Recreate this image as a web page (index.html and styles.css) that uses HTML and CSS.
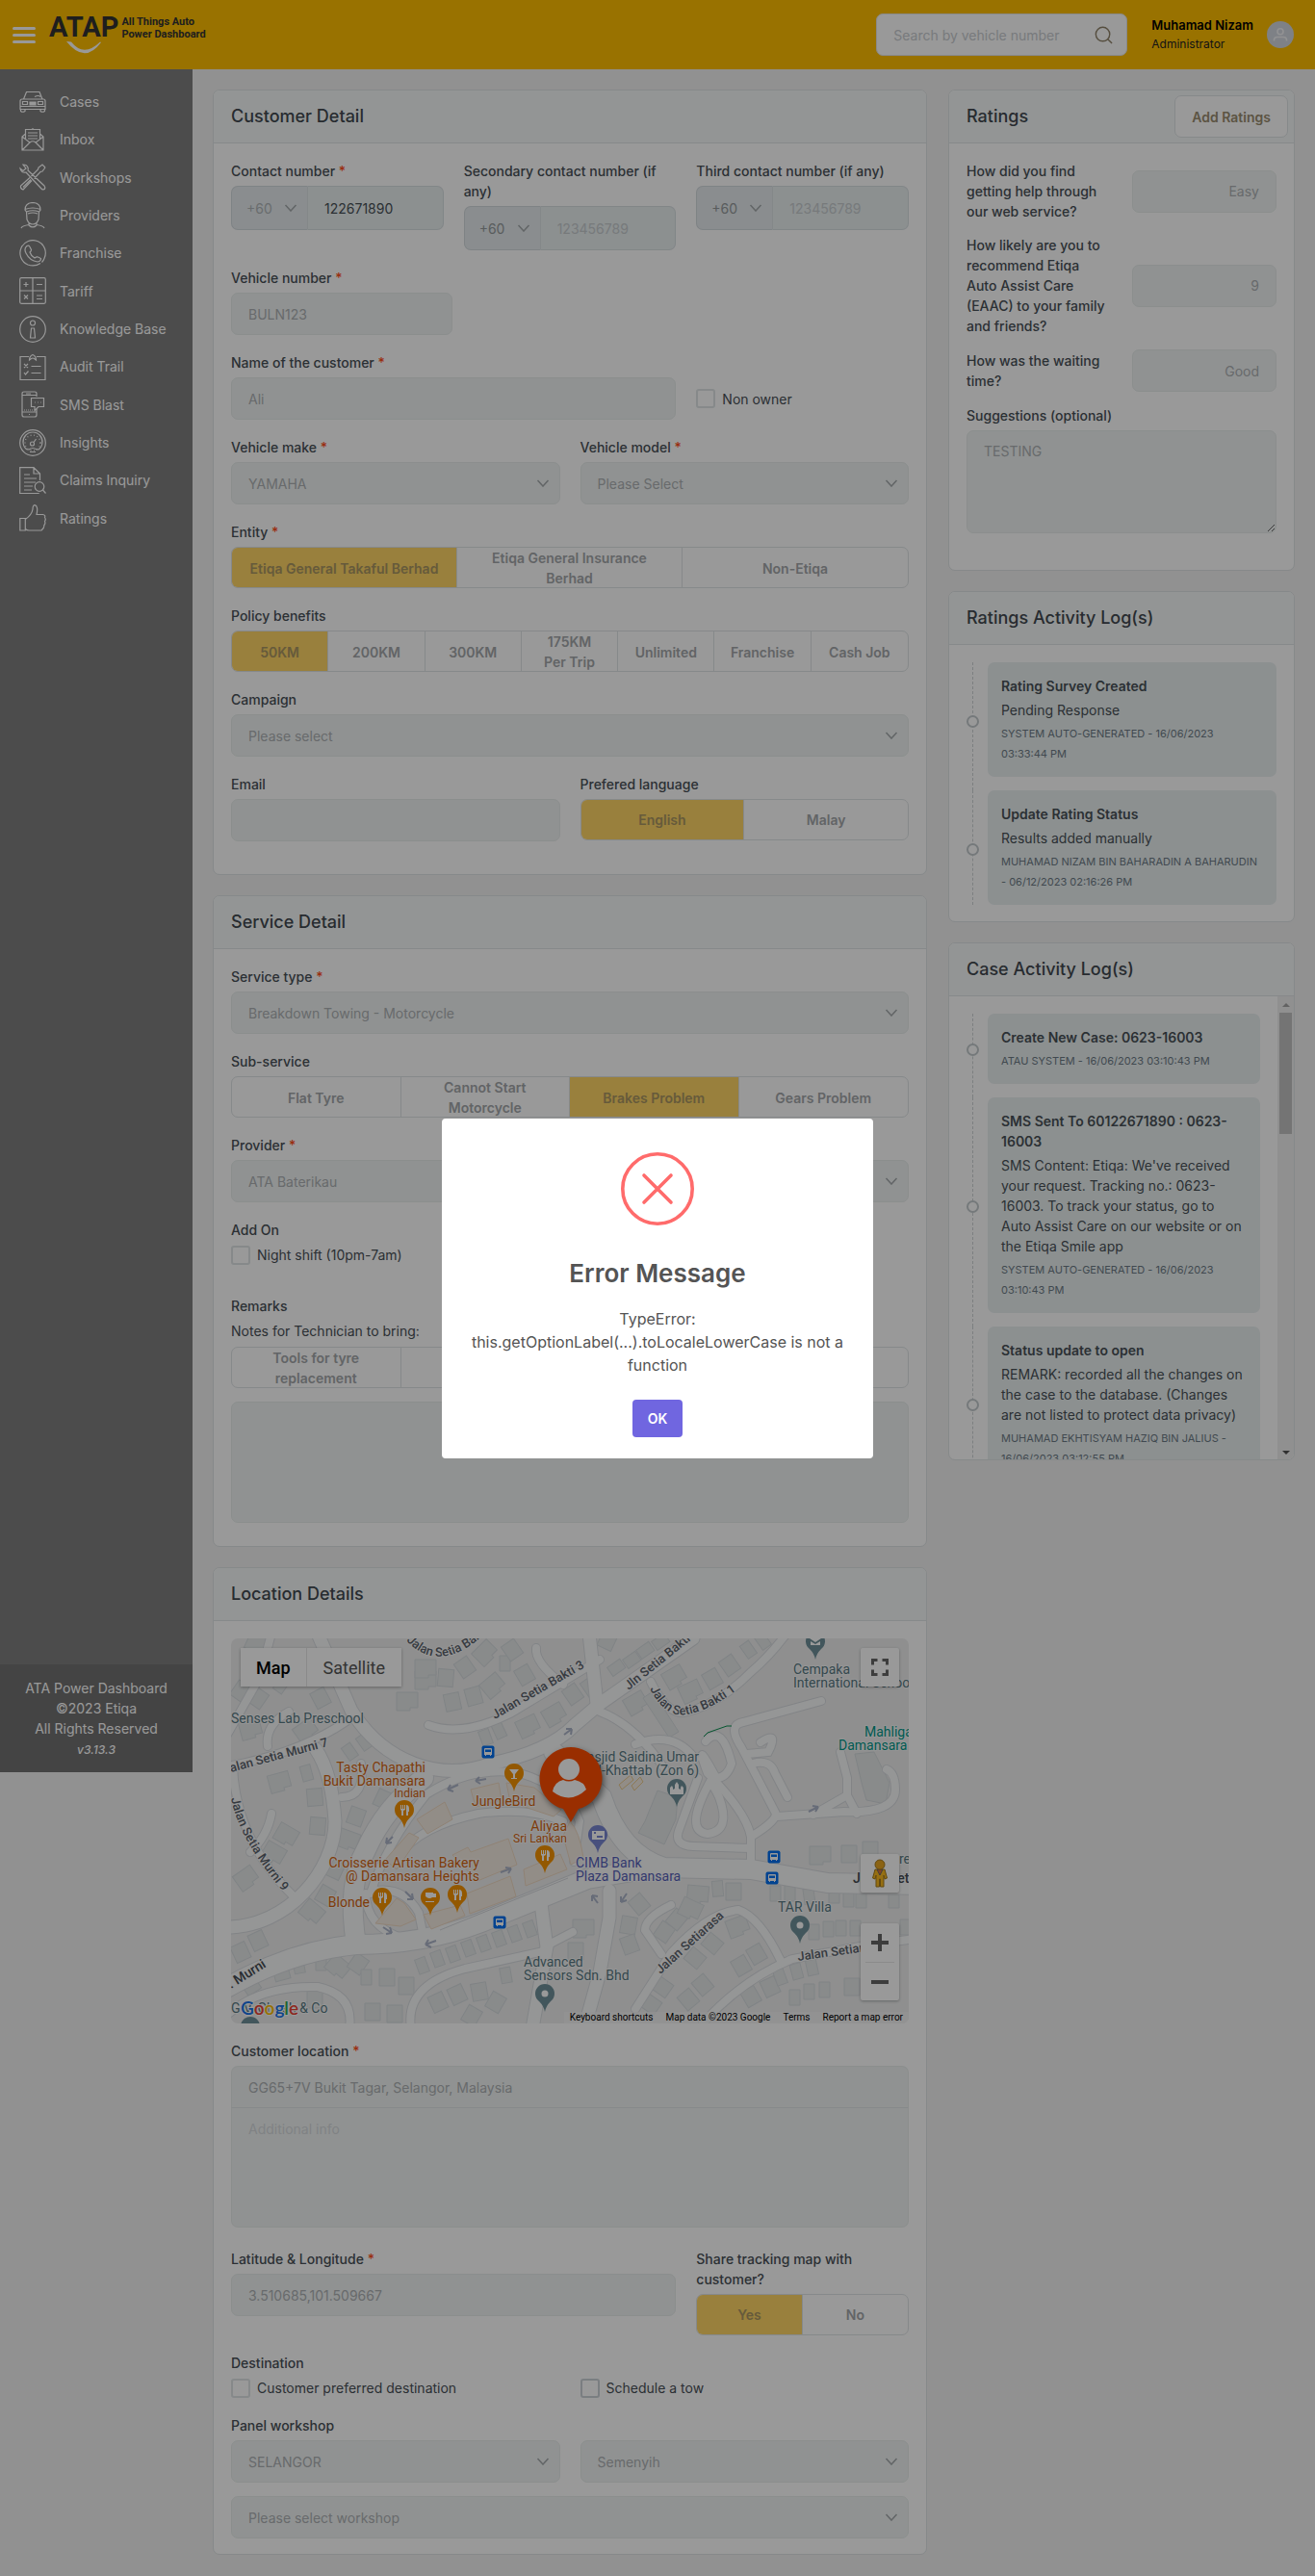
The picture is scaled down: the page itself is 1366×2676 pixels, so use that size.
FILE: index.html
```html
<!DOCTYPE html>
<html lang="en">
<head>
<meta charset="utf-8">
<meta name="viewport" content="width=device-width, initial-scale=1">
<title>ATA Power Dashboard</title>
<link rel="stylesheet" href="styles.css">
</head>
<body>
<header class="topbar">
  <button class="menu-btn" type="button" aria-label="Toggle menu"><span></span><span></span><span></span></button>
  <a class="logo" href="#" aria-label="ATAP All Things Auto Power Dashboard">
    <span class="logo-mark">ATAP
      <svg class="logo-smile" viewBox="0 0 36 13" aria-hidden="true"><path d="M0 0l5 .5Q18 17 35 .5L36 1Q19 24 0 0z" fill="#fff"/></svg>
    </span>
    <span class="logo-tag">All Things Auto<br>Power Dashboard</span>
  </a>
  <form class="search" role="search">
    <input type="text" aria-label="Search by vehicle number" placeholder="Search by vehicle number">
    <svg viewBox="0 0 20 20" aria-hidden="true"><circle cx="9" cy="9" r="7.6"/><path d="M14.500 14.500l4.500 4.500"/></svg>
  </form>
  <div class="user">
    <div class="user-text"><strong>Muhamad Nizam</strong><span>Administrator</span></div>
    <svg class="avatar" viewBox="0 0 28 28" aria-hidden="true"><circle cx="14" cy="14" r="14" fill="#d3d7df"/><g fill="none" stroke="#f3f4f6" stroke-width="1.600"><circle cx="14" cy="10.800" r="3"/><path d="M7.500 20.500v-1q0-3 3.500-3h6q3.500 0 3.500 3v1"/></g></svg>
  </div>
</header>

<div class="shell">
  <aside class="sidebar">
    <nav class="nav" aria-label="Main">
      <a href="#"><svg viewBox="0 0 28 28"><path d="M4.500 11L7.500 3.500h13.500L24 11M1 13q0-2 2-2h22q2 0 2 2v8.500H1zM1 18.500h26M1.500 21.500v2q2 1.500 4.500 0v-2M22 21.500v2q2 1.500 4.500 0v-2M16 8.500q4-2 6 0"/><path d="M3.500 13.500h5v3h-5zM19.500 13.500h5v3h-5z"/><path d="M11 14h6v3h-6z" fill="#fff"/></svg>Cases</a>
      <a href="#"><svg viewBox="0 0 28 28"><path d="M6.500 13V3.500h15V13M6.500 8L3 11v14h22V11l-3.500-3M3 11l8 6-8 8M25 11l-8 6 8 8M11 17q3-2.500 6 0M9 7h10M9 10h10M9 13h10M13 3.500q1-1.500 2 0"/></svg>Inbox</a>
      <a href="#"><svg viewBox="0 0 28 28"><path d="M4 1Q8 1 9 4q.5 2 0 3l17 16q2 3-1 4-1 0-2-1L7 9Q2 10 1 5l3 2.500L7 5zM27 4l-3-3-4 3-.5 2-7 7M27 4l-3 4-2 .5-6.500 7M11 14.500L1.500 23Q1 26 4 27l9-9.500M4 24.500l8-8"/></svg>Workshops</a>
      <a href="#"><svg viewBox="0 0 28 28"><path d="M6 8q0-7 8-7.500Q22 1 22 8l-1.500 2q-6.500-2.500-13 0zM6 7.500q8-3 16 0M7.500 10l.5 8q2 5 6 5t6-5l.5-8M9 12q5-2 10 0M10 21.500v2q-7 1-8 3.500M18 21.500v2q7 1 8 3.500M10 24q4 4 8 0"/></svg>Providers</a>
      <a href="#"><svg viewBox="0 0 28 28"><path d="M22 24.500q-6 4-13 1.500A13.200 13.200 0 1 1 26 19.500q-1 2.500-2.500 4"/><path d="M8 6.500q2-1 3 1l1.500 3q0 1.500-1.500 2.500 1 3.500 5 6 2-1.500 3.500-1l3 1.500q0 3-3.500 3.500Q11 22 7 14q-2.500-5 1-7.500z"/></svg>Franchise</a>
      <a href="#"><svg viewBox="0 0 28 28"><rect x=".7" y=".7" width="26.600" height="26.600" rx="1.500"/><path d="M14 1v26M1 14h26M4.500 7.500h5M7 5v5M18 7.500h6M5 18.500l4 4M9 18.500l-4 4M18 19h6M18 22.500h6"/></svg>Tariff</a>
      <a href="#"><svg viewBox="0 0 28 28"><circle cx="14" cy="14" r="13.300"/><circle cx="14" cy="7.500" r="2.500"/><path d="M12.500 13h3l1 10h-5z"/></svg>Knowledge Base</a>
      <a href="#"><svg viewBox="0 0 28 28"><path d="M10 3.500H1v24h26v-24h-9M10.500 7q0-4 3.500-5.500Q17.500 3 17.500 7l-2-1.500q-1.500-1-3 0zM5 11l4 4M9 11l-4 4M12.500 13.500h10M5 20l1.500 2 3-3.500M12.500 20.500h10"/></svg>Audit Trail</a>
      <a href="#"><svg viewBox="0 0 28 28"><path d="M18 6V3q0-2-2-2H5Q3 1 3 3v22q0 2 2 2h11q2 0 2-2v-6M3 4.500h15M3 22h15M7 3h5M10 24.500h1"/><path d="M12.500 7.500h13v9h-5.500l-4 4v-4h-3.500zM16 12h.8M19 12h.8M22 12h.8"/><path d="M5 20h10" stroke-dasharray="1 1"/></svg>SMS Blast</a>
      <a href="#"><svg viewBox="0 0 28 28"><circle cx="14" cy="14" r="13.300"/><path d="M8 21a10 10 0 1 1 12 0M8 21h2q4-3 8 0h2M11 23.500h6"/><circle cx="14" cy="14" r="8" stroke-dasharray="1 2.500"/><circle cx="13.500" cy="15" r="2"/><path d="M15 13.500l2.500-3.500"/></svg>Insights</a>
      <a href="#"><svg viewBox="0 0 28 28"><path d="M21.500 14V7L15 .7H.7v27h20M15 .7V7h6.500M5 8h6M5 12h13M5 16h12M5 20h9M5 24h8"/><circle cx="21" cy="20.500" r="4.800"/><path d="M24.500 24l3 3.500"/></svg>Claims Inquiry</a>
      <a href="#"><svg viewBox="0 0 28 28"><path d="M.8 14.500h5.500v12.500H.8zM6.300 15.500Q13 11 14 5q0-4 2-4.300 4 .8 2 9.800h6.500q3 .5 2 3 1.500 2 0 4 1 2.500-.7 4 .5 3-2.800 5.500H10q-2 0-3.700-1.500"/></svg>Ratings</a>
    </nav>
    <footer class="side-foot">
      <p>ATA Power Dashboard<br>©2023 Etiqa<br>All Rights Reserved</p>
      <em>v3.13.3</em>
    </footer>
  </aside>

  <main class="content">
    <div class="col-main">
      <section class="card">
        <div class="card-head"><h2>Customer Detail</h2></div>
        <div class="card-body">
          <div class="row thirds">
            <div class="field">
              <label for="phone1">Contact number <i>*</i></label>
              <div class="phone"><select aria-label="Country code" disabled><option>+60</option></select><input class="filled" id="phone1" type="text" value="122671890" disabled></div>
            </div>
            <div class="field">
              <label for="phone2">Secondary contact number (if any)</label>
              <div class="phone open"><select aria-label="Secondary country code" disabled><option>+60</option></select><input id="phone2" type="text" placeholder="123456789" disabled></div>
            </div>
            <div class="field">
              <label for="phone3">Third contact number (if any)</label>
              <div class="phone open"><select aria-label="Third country code" disabled><option>+60</option></select><input id="phone3" type="text" placeholder="123456789" disabled></div>
            </div>
          </div>
          <div class="row thirds">
            <div class="field"><label for="vehicle">Vehicle number <i>*</i></label><input class="control plate" id="vehicle" type="text" value="BULN123" disabled></div>
          </div>
          <div class="row wide-narrow">
            <div class="field"><label for="name">Name of the customer <i>*</i></label><input class="control" id="name" type="text" value="Ali" disabled></div>
            <label class="check beside"><input type="checkbox" disabled>Non owner</label>
          </div>
          <div class="row halves">
            <div class="field"><label for="make">Vehicle make <i>*</i></label><select class="control" id="make" disabled><option>YAMAHA</option></select></div>
            <div class="field"><label for="model">Vehicle model <i>*</i></label><select class="control" id="model" disabled><option>Please Select</option></select></div>
          </div>
          <div class="row">
            <div class="field"><span class="label" id="l-entity">Entity <i>*</i></span>
              <div class="segments" role="group" aria-labelledby="l-entity"><button class="on" type="button" disabled>Etiqa General Takaful Berhad</button><button type="button" disabled>Etiqa General Insurance Berhad</button><button type="button" disabled>Non-Etiqa</button></div></div>
          </div>
          <div class="row">
            <div class="field"><span class="label" id="l-policy">Policy benefits</span>
              <div class="segments" role="group" aria-labelledby="l-policy"><button class="on" type="button" disabled>50KM</button><button type="button" disabled>200KM</button><button type="button" disabled>300KM</button><button type="button" disabled>175KM Per Trip</button><button type="button" disabled>Unlimited</button><button type="button" disabled>Franchise</button><button type="button" disabled>Cash Job</button></div></div>
          </div>
          <div class="row">
            <div class="field"><label for="campaign">Campaign</label><select class="control" id="campaign" disabled><option>Please select</option></select></div>
          </div>
          <div class="row halves">
            <div class="field"><label for="email">Email</label><input class="control" id="email" type="email" disabled></div>
            <div class="field"><span class="label" id="l-lang">Prefered language</span>
              <div class="segments" role="group" aria-labelledby="l-lang"><button class="on" type="button" disabled>English</button><button type="button" disabled>Malay</button></div></div>
          </div>
        </div>
      </section>

      <section class="card">
        <div class="card-head"><h2>Service Detail</h2></div>
        <div class="card-body">
          <div class="row">
            <div class="field"><label for="stype">Service type <i>*</i></label><select class="control" id="stype" disabled><option>Breakdown Towing - Motorcycle</option></select></div>
          </div>
          <div class="row">
            <div class="field"><span class="label" id="l-sub">Sub-service</span>
              <div class="segments" role="group" aria-labelledby="l-sub"><button type="button" disabled>Flat Tyre</button><button type="button" disabled>Cannot Start Motorcycle</button><button class="on" type="button" disabled>Brakes Problem</button><button type="button" disabled>Gears Problem</button></div></div>
          </div>
          <div class="row">
            <div class="field"><label for="provider">Provider <i>*</i></label><select class="control" id="provider" disabled><option>ATA Baterikau</option></select></div>
          </div>
          <div class="row addon">
            <div class="field"><span class="label">Add On</span><label class="check"><input type="checkbox" disabled>Night shift (10pm-7am)</label></div>
          </div>
          <div class="field remarks">
            <label for="remarks">Remarks</label>
            <p id="l-notes">Notes for Technician to bring:</p>
            <div class="segments" role="group" aria-labelledby="l-notes"><button type="button" disabled>Tools for tyre replacement</button><span></span><span></span><span></span></div>
            <textarea class="control" id="remarks" disabled></textarea>
          </div>
        </div>
      </section>

      <section class="card">
        <div class="card-head"><h2>Location Details</h2></div>
        <div class="card-body">
          <div class="row">
            <div class="map">
              <svg class="map-art" viewBox="0 0 704 400" preserveAspectRatio="xMidYMid slice" role="img" aria-label="Street map of Damansara Heights">
                <defs>
                  <g id="r-wide"><path d="M-10 366Q60 325 130 318Q200 318 260 295L370 250L440 238"/><path d="M335 118L385 165Q405 225 450 238L540 240L620 254L714 256"/><path d="M130 318Q120 255 140 220Q160 175 200 145"/></g>
                  <g id="r-mid"><path d="M90 -5L125 75Q150 115 190 130T270 130Q330 118 357 90L383 68L480 0"/><path d="M393 262V290L383 347L367 405"/><path d="M-5 300C60 300 108 240 108 190Q105 140 88 115"/><path d="M322 275Q325 300 328 320L313 405"/><path d="M380 68L372 -5"/></g>
                  <g id="r-small"><path d="M-5 133Q70 120 120 86"/><path d="M-4 100L30 40L42 -5"/><path d="M38 112Q35 90 60 76"/><path d="M2 133Q5 210 65 268"/><path d="M42 182Q38 205 20 222"/><path d="M115 165Q140 165 135 130"/><path d="M205 90Q240 103 290 78L383 22"/><path d="M317 10Q315 25 345 48"/><path d="M436 45Q452 78 470 77Q505 70 540 35Q560 18 577 -5"/><path d="M383 76Q420 90 450 135"/><path d="M420 110Q460 95 482 125"/><path d="M613 65L532 87Q515 90 530 113L565 180Q570 188 540 206V232"/><path d="M493 107Q510 88 520 130Q515 145 504 145Q480 100 495 140Q535 180 540 206"/><path d="M567 185L637 180Q690 182 690 157Q690 140 681 136"/><path d="M605 183L640 163V145L633 118M640 163L650 182"/><path d="M485 145L465 200Q460 215 480 216L540 218"/><path d="M497 150Q470 200 495 203Q520 200 507 165Q500 150 497 150z"/><path d="M550 108Q570 95 558 118L536 120M542 130Q560 125 565 140L578 165"/><path d="M457 277Q430 290 430 303L447 328"/><path d="M420 385L457 327Q495 285 527 282Q550 290 572 337"/><path d="M490 400Q530 355 583 333L653 320L710 312"/><path d="M187 405Q180 360 243 343L325 325"/><path d="M-5 392Q30 360 90 362Q128 370 123 405"/><path d="M330 318L355 305"/><path d="M145 265Q160 215 203 162Q250 132 300 140Q350 155 362 190L356 232"/><path d="M172 228Q195 195 257 182Q310 175 345 190"/><path d="M140 265Q140 300 180 312L200 310L195 285Q180 258 150 262"/></g>
                  <g id="pin"><path d="M0 19Q-1 13-6 8A10 10 0 1 1 6 8Q1 13 0 19z"/></g>
                  <g id="fork" fill="#fff"><path d="M-4-5h1v4h1v-4h1v4h1v-4h1v5L-1 1v5h-2V1l-1-1zM2-5q3 0 3 4v3H4v4H2z"/></g>
                  <g id="bus"><rect x="-6.500" y="-6.500" width="13" height="13" rx="2" fill="#0070f0"/><path d="M-4-3q0-1 1-1h6q1 0 1 1v6h-1v1H2V3h-4v1h-1V3h-1z" fill="#fff"/><path d="M-3-2.500h6V0h-6z" fill="#0070f0"/></g>
                  <path id="a" d="M-8-9h16v18h-16z"/><path id="b" d="M-11-8h22v16h-8v3h-14z"/><path id="c" d="M-5-8H6V8h-11z"/>
                  <path id="t-top" d="M182 2Q215 38 262-3"/><path id="t-b1" d="M435 52Q452 86 478 78Q505 72 540 42"/><path id="t-m9" d="M0 166Q8 210 60 270"/>
                </defs>
                <rect width="704" height="400" fill="#eeefef"/>
                <g class="bldg">
                  <use href="#a" transform="translate(10 55) rotate(35)"/><use href="#a" transform="translate(28 62) rotate(35)"/><use href="#c" transform="translate(52 48) rotate(35)"/><use href="#c" transform="translate(72 28) rotate(-25)"/><use href="#a" transform="translate(93 62) rotate(-28)"/><use href="#b" transform="translate(20 93) rotate(-15)"/><use href="#b" transform="translate(77 95) rotate(-35)"/><use href="#b" transform="translate(28 4) rotate(25)"/>
                  <use href="#b" transform="translate(50 148) rotate(-15)"/><use href="#c" transform="translate(78 140) rotate(-15)"/><use href="#a" transform="translate(87 165) rotate(-5)"/><use href="#a" transform="translate(90 195) rotate(5)"/><use href="#b" transform="translate(58 203) rotate(30)"/><use href="#b" transform="translate(45 222) rotate(30)"/><use href="#b" transform="translate(15 248) rotate(-35)"/><use href="#b" transform="translate(85 283) rotate(40)"/><use href="#a" transform="translate(98 267) rotate(30)"/><use href="#a" transform="translate(108 240) rotate(25)"/><use href="#b" transform="translate(122 208) rotate(20)"/><use href="#a" transform="translate(130 185) rotate(20)"/><use href="#a" transform="translate(158 167) rotate(25)"/><use href="#c" transform="translate(123 118) rotate(-35)"/><use href="#c" transform="translate(138 108) rotate(-35)"/>
                  <use href="#b" transform="translate(183 64)"/><use href="#b" transform="translate(202 42)"/><use href="#a" transform="translate(223 41) rotate(5)"/><use href="#b" transform="translate(202 30)"/><use href="#a" transform="translate(243 30) rotate(-35)"/><use href="#a" transform="translate(230 66) rotate(-12)"/><use href="#a" transform="translate(252 60) rotate(-15)"/><use href="#b" transform="translate(271 48) rotate(-40)"/><use href="#b" transform="translate(263 14) rotate(-45)"/><use href="#c" transform="translate(284 26)"/><use href="#a" transform="translate(292 12) rotate(-35)"/><use href="#a" transform="translate(305 38) rotate(-30)"/><use href="#b" transform="translate(308 90) rotate(-25)"/><use href="#b" transform="translate(335 78) rotate(-30)"/><use href="#a" transform="translate(355 58) rotate(-35)"/><use href="#c" transform="translate(264 103) rotate(-20)"/><use href="#c" transform="translate(278 96) rotate(-25)"/><use href="#a" transform="translate(374 50) rotate(-35)"/>
                  <use href="#a" transform="translate(391 2) rotate(25)"/><use href="#c" transform="translate(400 30) rotate(55)"/><use href="#c" transform="translate(416 22) rotate(55)"/><use href="#c" transform="translate(430 12) rotate(55)"/><use href="#c" transform="translate(446 3) rotate(55)"/><use href="#b" transform="translate(460 39) rotate(-30)"/><use href="#b" transform="translate(477 54) rotate(-25)"/><use href="#a" transform="translate(500 42) rotate(-30)"/><use href="#a" transform="translate(518 28) rotate(-35)"/><use href="#c" transform="translate(537 12) rotate(-35)"/><use href="#c" transform="translate(552 3) rotate(-35)"/><use href="#b" transform="translate(420 66) rotate(-30)"/>
                  <path d="M428 62L438 55L465 97L455 103z"/><path d="M430 190L443 158L464 165L462 188L450 214L423 202z"/><path d="M648 120L668 118L684 150L680 172L660 168L655 150z"/>
                  <use href="#b" transform="translate(612 224)"/><use href="#a" transform="translate(642 224)"/><use href="#a" transform="translate(664 220)"/><use href="#c" transform="translate(565 265)"/><use href="#c" transform="translate(580 265)"/><use href="#c" transform="translate(600 268) rotate(-8)"/><use href="#c" transform="translate(626 267)"/><use href="#c" transform="translate(641 271)"/><use href="#c" transform="translate(654 272)"/><use href="#c" transform="translate(688 272)"/><use href="#b" transform="translate(485 265) rotate(5)"/><use href="#c" transform="translate(505 260) rotate(-5)"/><use href="#a" transform="translate(522 263)"/><use href="#a" transform="translate(424 276) rotate(-40)"/><use href="#a" transform="translate(413 298) rotate(10)"/><use href="#a" transform="translate(414 318) rotate(-20)"/><use href="#a" transform="translate(450 305) rotate(35)"/><use href="#a" transform="translate(463 292) rotate(40)"/><use href="#b" transform="translate(478 280) rotate(25)"/><use href="#b" transform="translate(526 298) rotate(-20)"/><use href="#a" transform="translate(500 317) rotate(-50)"/><use href="#a" transform="translate(482 332) rotate(-50)"/><use href="#a" transform="translate(546 328) rotate(-30)"/><use href="#a" transform="translate(530 340) rotate(-30)"/><use href="#a" transform="translate(448 362) rotate(-55)"/><use href="#a" transform="translate(436 380) rotate(-55)"/><use href="#a" transform="translate(490 360) rotate(-40)"/><use href="#a" transform="translate(475 375) rotate(-40)"/><use href="#a" transform="translate(540 372) rotate(-30)"/><use href="#a" transform="translate(560 362) rotate(-25)"/><use href="#c" transform="translate(570 352) rotate(-20)"/><use href="#c" transform="translate(587 346) rotate(-15)"/><use href="#c" transform="translate(603 342) rotate(-12)"/><use href="#c" transform="translate(585 373)"/><use href="#c" transform="translate(600 367)"/><use href="#c" transform="translate(616 365)"/><use href="#a" transform="translate(645 362)"/><use href="#c" transform="translate(605 305)"/><use href="#c" transform="translate(620 302)"/><use href="#c" transform="translate(633 301)"/><use href="#c" transform="translate(648 301)"/><use href="#c" transform="translate(700 300)"/>
                  <use href="#b" transform="translate(366 300)"/><use href="#a" transform="translate(358 325)"/><use href="#a" transform="translate(10 326) rotate(-25)"/><use href="#a" transform="translate(28 314) rotate(-25)"/><use href="#a" transform="translate(52 346) rotate(-15)"/><use href="#c" transform="translate(70 340) rotate(-10)"/><use href="#c" transform="translate(93 337)"/><use href="#b" transform="translate(112 340) rotate(40)"/><use href="#a" transform="translate(132 338) rotate(35)"/><use href="#a" transform="translate(20 360) rotate(-35)"/><use href="#c" transform="translate(140 352)"/><use href="#a" transform="translate(162 352)"/><use href="#a" transform="translate(182 361)"/><use href="#a" transform="translate(147 388)"/><use href="#a" transform="translate(170 390)"/><use href="#a" transform="translate(87 375)"/><use href="#c" transform="translate(198 340) rotate(-20)"/><use href="#c" transform="translate(214 333) rotate(-20)"/><use href="#c" transform="translate(230 328) rotate(-20)"/><use href="#c" transform="translate(246 322) rotate(-20)"/><use href="#c" transform="translate(262 317) rotate(-20)"/><use href="#c" transform="translate(278 312) rotate(-20)"/><use href="#c" transform="translate(294 307) rotate(-20)"/><use href="#c" transform="translate(310 302) rotate(-20)"/><use href="#a" transform="translate(215 378) rotate(-25)"/><use href="#a" transform="translate(235 370) rotate(-25)"/><use href="#a" transform="translate(258 367) rotate(-10)"/><use href="#c" transform="translate(285 350) rotate(-10)"/><use href="#a" transform="translate(250 392) rotate(30)"/><use href="#a" transform="translate(275 378) rotate(30)"/>
                </g>
                <g class="casing"><use href="#r-small" stroke-width="10"/><use href="#r-mid" stroke-width="15"/><use href="#r-wide" stroke-width="22"/></g>
                <g class="street"><use href="#r-small" stroke-width="8"/><use href="#r-mid" stroke-width="13"/><use href="#r-wide" stroke-width="20"/></g>
                <g class="plot"><path d="M193 188L222 170L230 188L204 203z"/><path d="M230 225L246 217L249 222L288 208L297 235L256 252z"/><path d="M249 157L278 150L281 168L254 175z"/><path d="M286 150L315 155L343 178L335 185L290 170z"/><path d="M245 265L290 247L296 268L248 286z"/><path d="M200 287L238 277L243 288L208 302z"/><path d="M304 240L342 224L349 240L306 257z"/><path d="M160 230L185 202L195 207L172 240z"/><path d="M150 296L172 270L180 275L192 292L176 299z"/><path d="M352 190Q362 200 366 228L353 235L345 205z"/></g>
                <g class="plot line"><path d="M403 152L415 142L418 147L406 157zM416 153L425 144L428 149L419 158z"/></g>
                <path d="M491 102L495 98L515 91L520 91" fill="none" stroke="#0a8f50"/>
                <path d="M217 303L350 249" stroke="#d5d8dc"/>
                <g class="arrow"><path d="M225 157l11-5M225 157l3-5M225 157l6 2"/><path d="M254 148l11-2M254 148l4-4M254 148l5 3M161 213l7-7M161 213l1-6M161 213l6-1M280 243l11-4M291 239l-6-1M291 239l-3 5M181 263l8 8M189 271l-1-6M189 271l-6 0M158 300l9 6M167 306l-2-6M167 306l-6 1M202 318l11-4M202 318l6 3M202 318l3-5M346 100l8-6M354 94l-6 0M354 94l-1 6M600 180l10-5M610 175l-6-1M610 175l-3 5M375 267l6 8M375 267l0 6M375 267l6 1M405 274l6-9M405 274l6-2M405 274l0-6"/></g>
                <g class="road-label">
                  <text><textPath href="#t-top">Jalan Setia Bakti</textPath></text>
                  <text transform="translate(274 84) rotate(-30)">Jalan Setia Bakti 3</text>
                  <text transform="translate(413 54) rotate(-39)">Jln Setia Bakti</text>
                  <text><textPath href="#t-b1">Jalan Setia Bakti 1</textPath></text>
                  <text transform="translate(0 139) rotate(-15)">alan Setia Murni 7</text>
                  <text><textPath href="#t-m9">Jalan Setia Murni 9</textPath></text>
                  <text class="major" transform="translate(0 364) rotate(-32)">. Murni</text>
                  <text transform="translate(446 349) rotate(-42)">Jalan Setiarasa</text>
                  <text transform="translate(589 335) rotate(-8)">Jalan Setiarasa</text>
                  <text class="major" x="646" y="254">Jalan Set</text>
                </g>
                <g class="place">
                  <text x="0" y="88">Senses Lab Preschool</text><text class="end" x="486" y="128">Masjid Saidina Umar</text><text class="end" x="486" y="142">Al-Khattab (Zon 6)</text><text x="568" y="284">TAR Villa</text><text x="584" y="37">Cempaka</text><text x="584" y="51">International Schoo</text><text x="304" y="341">Advanced</text><text x="304" y="355">Sensors Sdn. Bhd</text><text x="0" y="389">G V. Ghosh &amp; Co</text><text x="694" y="234">re</text>
                </g>
                <g class="place teal"><text x="658" y="102">Mahliga</text><text x="631" y="116">Damansara</text></g>
                <g class="place blue"><text x="358" y="238">CIMB Bank</text><text x="358" y="252">Plaza Damansara</text></g>
                <g class="place food"><text class="end" x="202" y="139">Tasty Chapathi</text><text class="end" x="202" y="153">Bukit Damansara</text><text class="end sub" x="202" y="165">Indian</text><text x="250" y="174">JungleBird</text><text class="end" x="349" y="200">Aliyaa</text><text class="end sub" x="349" y="212">Sri Lankan</text><text class="end" x="258" y="238">Croisserie Artisan Bakery</text><text class="end" x="258" y="252">@ Damansara Heights</text><text class="end" x="144" y="279">Blonde</text></g>
                <g fill="#f59300"><use href="#pin" x="180" y="178"/><use href="#pin" x="294" y="140"/><use href="#pin" x="326" y="225"/><use href="#pin" x="157" y="269"/><use href="#pin" x="207" y="269"/><use href="#pin" x="235" y="266"/></g>
                <use href="#fork" x="180" y="178"/><use href="#fork" x="326" y="225"/><use href="#fork" x="157" y="269"/><use href="#fork" x="235" y="266"/>
                <path d="M289 136h10l-4 5v4h2v1h-6v-1h2v-4zM202 264h8v1h3v4h-4q-1 1-3 1t-4-2zM202 273h9v1h-9z" fill="#fff"/>
                <g fill="#6f9099"><use href="#pin" x="326" y="369"/><use href="#pin" x="591" y="298"/><use href="#pin" x="463" y="156"/><use href="#pin" x="607" y="3"/><use href="#pin" x="20" y="403"/></g>
                <g fill="#fff"><circle cx="326" cy="369" r="3.500"/><circle cx="591" cy="298" r="3.500"/><path d="M456 162v-7l2-2 1 2v2l2-1v-4l2-3 2 3v4l2 1v-2l1-2 2 2v7zM601 0h12l-6 4zM602 3l5 3 5-3v4h-10z"/></g>
                <use href="#pin" x="381" y="204" fill="#7885d0"/><path d="M375 200h13v9h-13z" fill="#fff"/><path d="M377 202h2M380 206h6" stroke="#7885d0" stroke-width="2"/>
                <use href="#bus" x="267" y="118"/><use href="#bus" x="279" y="295"/><use href="#bus" x="564" y="227"/><use href="#bus" x="562" y="249"/>
                <g class="marker"><path d="M353 191L345 177A32.500 32.500 0 1 1 361 177z" fill="#ff4d00"/><circle cx="351" cy="136" r="11" fill="#fff"/><path d="M334 159Q336 149 345 147Q351 150 357 147Q367 149 369 157Q352 173 334 159z" fill="#fff"/></g>
                <text class="brand" x="10" y="391"><tspan fill="#1a73e8">G</tspan><tspan fill="#ea4335">o</tspan><tspan fill="#fbbc04">o</tspan><tspan fill="#1a73e8">g</tspan><tspan fill="#34a853">l</tspan><tspan fill="#ea4335">e</tspan></text>
              </svg>
              <div class="map-types"><button class="active" type="button">Map</button><button type="button">Satellite</button></div>
              <button class="map-btn full" type="button" aria-label="Toggle fullscreen view"><svg viewBox="0 0 18 18"><path d="M1.500 6.500v-5h5M11.500 1.500h5v5M16.500 11.500v5h-5M6.500 16.500h-5v-5"/></svg></button>
              <div class="map-tools">
                <button class="map-btn" type="button" aria-label="Street View"><svg viewBox="0 0 18 30" class="pegman"><path d="M4 11h10l2.500 9-2.500 1-1-4v12H9.500v-8h-1v8H5V17l-1 4-2.500-1z" fill="#fab91e" stroke="#a57b1c"/><path d="M6 11h6l-3 6z" fill="#e5703a"/><circle cx="9" cy="6" r="5" fill="#e8a520" stroke="#a57b1c"/></svg></button>
                <div class="zoom"><button type="button" aria-label="Zoom in"><svg viewBox="0 0 18 18"><path d="M0 9h18M9 0v18"/></svg></button><button type="button" aria-label="Zoom out"><svg viewBox="0 0 18 18"><path d="M0 9h18"/></svg></button></div>
              </div>
              <div class="map-legal"><a href="#">Keyboard shortcuts</a><span>Map data ©2023 Google</span><a href="#">Terms</a><a href="#">Report a map error</a></div>
            </div>
          </div>
          <div class="row location">
            <div class="field"><label for="loc">Customer location <i>*</i></label>
              <div class="stack"><input class="control" id="loc" type="text" value="GG65+7V Bukit Tagar, Selangor, Malaysia" disabled><textarea class="control" aria-label="Additional info" placeholder="Additional info" disabled></textarea></div></div>
          </div>
          <div class="row wide-narrow">
            <div class="field"><label for="latlng">Latitude &amp; Longitude <i>*</i></label><input class="control" id="latlng" type="text" value="3.510685,101.509667" disabled></div>
            <div class="field"><span class="label" id="l-share">Share tracking map with customer?</span>
              <div class="segments" role="group" aria-labelledby="l-share"><button class="on" type="button" disabled>Yes</button><button type="button" disabled>No</button></div></div>
          </div>
          <div class="row">
            <div class="field"><span class="label">Destination</span>
              <div class="row halves flush"><label class="check"><input type="checkbox" disabled>Customer preferred destination</label><label class="check"><input class="strong" type="checkbox">Schedule a tow</label></div></div>
          </div>
          <div class="row flush">
            <div class="field panel"><label for="state">Panel workshop</label>
              <div class="row halves flush"><select class="control" id="state" disabled><option>SELANGOR</option></select><select class="control" aria-label="Area" disabled><option>Semenyih</option></select></div>
              <select class="control" aria-label="Workshop" disabled><option>Please select workshop</option></select></div>
          </div>
        </div>
      </section>
    </div>

    <div class="col-side">
      <section class="card">
        <div class="card-head"><h2>Ratings</h2><button class="outline" type="button">Add Ratings</button></div>
        <div class="card-body ratings">
          <div class="question"><label for="q1">How did you find getting help through our web service?</label><input class="control" id="q1" type="text" value="Easy" disabled></div>
          <div class="question"><label for="q2">How likely are you to recommend Etiqa Auto Assist Care (EAAC) to your family and friends?</label><input class="control" id="q2" type="text" value="9" disabled></div>
          <div class="question"><label for="q3">How was the waiting time?</label><input class="control" id="q3" type="text" value="Good" disabled></div>
          <div class="field"><label for="suggest">Suggestions (optional)</label><textarea class="control" id="suggest" disabled>TESTING</textarea></div>
        </div>
      </section>

      <section class="card">
        <div class="card-head"><h2>Ratings Activity Log(s)</h2></div>
        <ol class="log">
          <li><div class="entry"><h3>Rating Survey Created</h3><p>Pending Response</p><small>SYSTEM AUTO-GENERATED - 16/06/2023 03:33:44&nbsp;PM</small></div></li>
          <li><div class="entry"><h3>Update Rating Status</h3><p>Results added manually</p><small>MUHAMAD NIZAM BIN BAHARADIN A BAHARUDIN - 06/12/2023 02:16:26&nbsp;PM</small></div></li>
        </ol>
      </section>

      <section class="card">
        <div class="card-head"><h2>Case Activity Log(s)</h2></div>
        <div class="scroller">
          <ol class="log">
            <li><div class="entry"><h3>Create New Case: 0623-16003</h3><small>ATAU SYSTEM - 16/06/2023 03:10:43&nbsp;PM</small></div></li>
            <li><div class="entry"><h3>SMS Sent To 60122671890 : 0623-16003</h3><p>SMS Content: Etiqa: We've received your request. Tracking no.: 0623-16003. To track your status, go to Auto Assist Care on our website or on the Etiqa Smile app</p><small>SYSTEM AUTO-GENERATED - 16/06/2023 03:10:43&nbsp;PM</small></div></li>
            <li><div class="entry"><h3>Status update to open</h3><p>REMARK: recorded all the changes on the case to the database. (Changes are not listed to protect data privacy)</p><small>MUHAMAD EKHTISYAM HAZIQ BIN JALIUS - 16/06/2023 03:12:55&nbsp;PM</small></div></li>
          </ol>
          <div class="scrollbar" aria-hidden="true"><span class="up"></span><span class="thumb"></span><span class="down"></span></div>
        </div>
      </section>
    </div>
  </main>
</div>

<div class="backdrop">
  <div class="modal" role="alertdialog" aria-modal="true" aria-labelledby="m-title" aria-describedby="m-text">
    <svg class="modal-icon" viewBox="0 0 76 76" aria-hidden="true"><circle cx="38" cy="38" r="36.200"/><path d="M24 24l28 28M52 24l-28 28"/></svg>
    <h2 id="m-title">Error Message</h2>
    <p id="m-text">TypeError: this.getOptionLabel(...).toLocaleLowerCase is not a function</p>
    <button type="button">OK</button>
  </div>
</div>
</body>
</html>
```
FILE: styles.css
```css
:root {
  --brand: #ffbf00;
  --brand-soft: #ffd566;
  --text: #495057;
  --heading: #424950;
  --muted: #a4a7aa;
  --value: #adb1b4;
  --line: #dfe4e6;
  --field: #f0f4f3;
  --field-line: #e8edec;
  --danger: #ff4d1a;
}

*, ::before { box-sizing: border-box; }

body {
  margin: 0;
  background: #f2f2f2;
  color: var(--text);
  font: 14px/21px Inter, "Liberation Sans", sans-serif;
}

h2, h3, p { margin: 0; }
a { color: inherit; text-decoration: none; }
button, input, select, textarea { font: inherit; margin: 0; }

/* Top bar */
.topbar {
  display: flex;
  align-items: center;
  height: 72px;
  padding: 0 22px 0 13px;
  background: var(--brand);
}
.menu-btn {
  display: flex;
  flex-direction: column;
  gap: 4px;
  width: 24px;
  padding: 0;
  border: 0;
  background: none;
}
.menu-btn span { height: 3px; border-radius: 2px; background: #fff; }
.logo { display: flex; gap: 3px; margin-left: 14px; color: #333; }
.logo-mark {
  position: relative;
  height: 44px;
  font: bold 29px/28px Roboto, "Open Sans", sans-serif;
}
.logo-smile { position: absolute; left: 18px; top: 29px; width: 36px; height: 13px; overflow: visible; }
.logo-tag { padding-top: 2px; font: bold 11px/13px Roboto, "Open Sans", sans-serif; }
.search { position: relative; width: 261px; margin-left: auto; }
.search input {
  width: 100%;
  height: 44px;
  padding: 0 52px 0 17px;
  border: 1px solid #e4e4e4;
  border-radius: 7px;
  background: #fff;
}
.search input::placeholder { color: #c8ccd0; opacity: 1; }
.search svg {
  position: absolute;
  right: 15px;
  top: 13px;
  width: 19px;
  height: 19px;
  fill: none;
  stroke: #8f836a;
  stroke-width: 1.5;
}
.user { display: flex; align-items: center; gap: 14px; margin-left: 25px; color: #000; }
.user-text { display: flex; flex-direction: column; font-size: 13px; line-height: 19px; }
.user-text strong { font-weight: 600; }
.user-text span { color: #222; font-size: 12px; }
.avatar { width: 28px; height: 28px; }

/* Layout */
.shell { display: grid; grid-template-columns: 200px 1fr; align-items: start; }
.content {
  display: grid;
  grid-template-columns: repeat(12, 1fr);
  gap: 22px;
  align-items: start;
  padding: 21px;
}
.col-main { grid-column: span 8; }
.col-side { grid-column: span 4; }
.col-main, .col-side { display: flex; flex-direction: column; gap: 21px; min-width: 0; }

/* Sidebar */
.sidebar {
  display: flex;
  flex-direction: column;
  justify-content: space-between;
  min-height: calc(66vh + 3px);
  background: #7f7f7f;
  color: #fff;
}
.nav { display: grid; grid-auto-rows: 1fr; height: 472px; margin-top: 14px; padding-left: 20px; }
.nav a { display: flex; align-items: center; gap: 14px; }
.nav svg { width: 28px; height: 28px; fill: none; stroke: #fff; stroke-width: 1.2; }
.side-foot { padding: 14px 0 12px; background: #727272; text-align: center; }
.side-foot em { display: block; font-size: 12px; line-height: 23px; font-weight: 500; }

/* Cards */
.card { overflow: hidden; border: 1px solid var(--line); border-radius: 7px; background: #fff; }
.card-head {
  display: flex;
  align-items: center;
  justify-content: space-between;
  height: 55px;
  padding: 0 6px 0 18px;
  border-bottom: 1px solid var(--line);
  background: #f6f9f8;
}
.card-head h2 { color: var(--heading); font-size: 18px; line-height: 22px; font-weight: 500; }
.outline {
  height: 44px;
  padding: 0 17px;
  border: 1px solid var(--line);
  border-radius: 7px;
  background: #fff;
  color: #998c70;
  font-weight: 600;
}
.card-body { padding: 18px 18px 16px; }

.row { display: grid; gap: 21px; margin-bottom: 18px; }
.thirds, .wide-narrow { grid-template-columns: repeat(3, minmax(0, 1fr)); }
.halves { grid-template-columns: repeat(2, minmax(0, 1fr)); }
.wide-narrow > :first-child { grid-column: span 2; }
.flush { margin-bottom: 0; }
.location { margin-bottom: 22px; }

.field > label:not(.check), .label, .question label { display: block; color: var(--text); font-weight: 500; }
.field > label:not(.check), .label { margin-bottom: 5px; }
.field i { color: var(--danger); font-style: normal; }

.control {
  display: block;
  width: 100%;
  height: 44px;
  padding: 0 17px;
  border: 1px solid var(--field-line);
  border-radius: 7px;
  background-color: var(--field);
  color: var(--value);
  opacity: 1;
}
.plate { width: 230px; }
textarea.control { padding: 11px 17px; resize: none; }
.control::placeholder { color: #d5d9dd; opacity: 1; }
select {
  appearance: none;
  opacity: 1;
  background: no-repeat right 10px center / 14px 8px
    url("data:image/svg+xml,%3Csvg xmlns='http://www.w3.org/2000/svg' viewBox='0 0 14 8'%3E%3Cpath d='M1.500 1l5.500 6 5.500-6' fill='none' stroke='%23a3a8ab' stroke-width='1.500'/%3E%3C/svg%3E");
}

.phone { display: flex; height: 46px; }
.phone select {
  width: 80px;
  padding: 0 15px;
  border: 1px solid #d3dade;
  border-right-color: #dde3e5;
  border-radius: 7px 0 0 7px;
  background-color: #e6ecee;
  color: #b0b5b8;
}
.phone.open select { color: #94999c; }
.phone input {
  flex: 1;
  min-width: 0;
  padding: 0 17px;
  border: 1px solid #d8dfe2;
  border-left: 0;
  border-radius: 0 7px 7px 0;
  background: #e9f0f1;
  color: var(--text);
}
.phone input::placeholder { color: #c6cbce; opacity: 1; }

.check { display: flex; align-items: center; gap: 7px; height: 21px; }
.check.beside { height: 44px; align-self: end; }
.check input {
  appearance: none;
  flex: none;
  width: 20px;
  height: 20px;
  border: 2px solid var(--line);
  border-radius: 3px;
}
.check input.strong { border-color: #ccd3d8; }

.segments {
  display: grid;
  grid-auto-flow: column;
  grid-auto-columns: minmax(0, 1fr);
  height: 43px;
  border: 1px solid var(--line);
  border-radius: 7px;
  overflow: hidden;
}
.segments > * {
  padding: 0 16px;
  border: 0;
  border-right: 1px solid var(--line);
  background: none;
  color: var(--muted);
  font-weight: 600;
}
.segments > :last-child { border-right: 0; }
.segments > span + span { border-right: 0; }
.segments .on { background: var(--brand-soft); color: #aa9763; }

.addon { margin-bottom: 32px; }
.remarks p { margin-bottom: 6px; }
.remarks textarea { height: 126px; margin: 14px 0 8px; }
.stack .control:first-child { border-bottom-color: var(--line); border-radius: 7px 7px 0 0; }
.stack textarea { height: 124px; border-top: 0; border-radius: 0 0 7px 7px; }
.panel { display: grid; }
.panel > select { margin-top: 14px; }

/* Ratings */
.ratings { display: grid; gap: 14px; padding-bottom: 38px; }
.question { display: grid; grid-template-columns: 1fr 1fr; gap: 21px; align-items: center; }
.question .control { text-align: right; }
.ratings textarea { height: 107px; padding: 10px 17px; resize: vertical; }

/* Activity logs */
.log { flex: 1; min-width: 0; margin: 0; padding: 18px 18px 17px; list-style: none; }
.log li {
  position: relative;
  display: grid;
  grid-template-columns: 1fr;
  margin-left: 6px;
  padding: 0 0 14px 15px;
  border-left: 1px dashed #cfd4d6;
}
.log li:last-child { padding-bottom: 0; }
.log li::before {
  content: "";
  position: absolute;
  left: -7px;
  top: 55px;
  width: 13px;
  height: 13px;
  border: 2px solid #c3cacd;
  border-radius: 50%;
  background: #fff;
}
.entry { padding: 14px 14px 13px; border-radius: 7px; background: #e9f0f1; }
.entry h3 { font-size: 14px; line-height: 21px; font-weight: 600; }
.entry p { margin-top: 4px; }
.entry small { display: block; margin-top: 4px; color: #6d7b85; font-size: 11px; line-height: 21px; }
.scroller { display: flex; height: 481px; overflow: hidden; }
.scroller .log { height: max-content; }
.scroller li:nth-child(1)::before { top: 31px; }
.scroller li:nth-child(2)::before { top: 107px; }
.scroller li:nth-child(3)::before { top: 75px; }
.scrollbar { display: flex; flex-direction: column; align-items: center; width: 17px; background: #f1f1f1; }
.scrollbar .up, .scrollbar .down { border: 4px solid transparent; }
.scrollbar .up { margin: 3px 0 6px; border-bottom-color: #a3a3a3; }
.scrollbar .down { margin: auto 0 1px; border-top-color: #505050; }
.scrollbar .thumb { width: 13px; height: 126px; background: #c1c1c1; }

/* Map */
.map { position: relative; height: 400px; overflow: hidden; border-radius: 7px; font-family: Roboto, sans-serif; }
.map-art { display: block; width: 100%; height: 100%; }
.bldg { fill: #e4e8e8; stroke: #d6dbde; }
.plot { fill: #f4ebe2; stroke: #efd9c2; }
.plot.line { stroke: #e9c88c; }
.casing { fill: none; stroke: #d9dce0; stroke-linecap: round; }
.street { fill: none; stroke: #f9fafa; stroke-linecap: round; }
.arrow { fill: none; stroke: #acb4c8; stroke-width: 2; }
.road-label, .place { paint-order: stroke; stroke: #f8f8f8; stroke-width: 2; stroke-linejoin: round; }
.road-label { fill: #5a626b; font-size: 13px; font-weight: 500; }
.road-label .major { fill: #454b52; font-size: 14px; }
.place { fill: #587883; font-size: 14px; }
.place.teal { fill: #009688; }
.place.blue { fill: #5560b8; }
.place.food { fill: #d26410; }
.end { text-anchor: end; }
.sub { font-size: 12px; }
.brand { paint-order: stroke; stroke: #fff; stroke-width: 2; font: 600 19px Lato, sans-serif; }
.marker { filter: drop-shadow(2px 3px 3px rgb(0 0 0 / 50%)); }
.map-types { position: absolute; left: 10px; top: 10px; display: flex; box-shadow: 0 1px 3px rgb(0 0 0 / 30%); }
.map-types button { height: 40px; padding: 0 17px; border: 0; background: #fff; color: #565656; font-size: 18px; }
.map-types .active { padding: 0 16px; border-right: 1px solid #e6e6e6; color: #000; font-weight: 500; }
.map-btn, .zoom {
  width: 40px;
  border: 0;
  border-radius: 2px;
  background: #fff;
  box-shadow: 0 1px 3px rgb(0 0 0 / 30%);
}
.map-btn { display: grid; place-items: center; height: 40px; padding: 0; }
.map svg:not(.map-art) { width: 18px; height: 18px; fill: none; stroke: #666; stroke-width: 4; }
.map .full svg { stroke-width: 3; }
.full { position: absolute; right: 10px; top: 10px; }
.map-tools { position: absolute; right: 10px; bottom: 24px; display: grid; gap: 32px; }
.map .map-btn .pegman { height: 30px; stroke-width: 1; }
.zoom { display: grid; padding: 0 5px; }
.zoom button { display: grid; place-items: center; height: 40px; padding: 0; border: 0; background: none; }
.zoom button + button { border-top: 1px solid #e6e6e6; }
.map-legal {
  position: absolute;
  right: 0;
  bottom: 0;
  display: flex;
  gap: 13px;
  padding: 0 6px;
  background: rgb(245 245 245 / 70%);
  color: #000;
  font-size: 10px;
  line-height: 12px;
}

/* Error dialog */
.backdrop { position: fixed; inset: 0; display: flex; align-items: center; justify-content: center; background: rgb(0 0 0 / 40%); }
.modal {
  display: flex;
  flex-direction: column;
  align-items: center;
  width: 448px;
  padding: 35px 22px 22px;
  border-radius: 4px;
  background: #fff;
  color: #545454;
  text-align: center;
}
.modal-icon { width: 76px; height: 76px; fill: none; stroke: #ff6b6b; stroke-width: 3.6; stroke-linecap: round; }
.modal h2 { margin-top: 34px; font-size: 26px; line-height: 32px; font-weight: 600; }
.modal p { margin-top: 19px; font-size: 16px; line-height: 24px; }
.modal button {
  height: 39px;
  margin-top: 24px;
  padding: 0 16px;
  border: 0;
  border-radius: 4px;
  background: #7066e0;
  color: #fff;
  font-weight: 600;
}
```
